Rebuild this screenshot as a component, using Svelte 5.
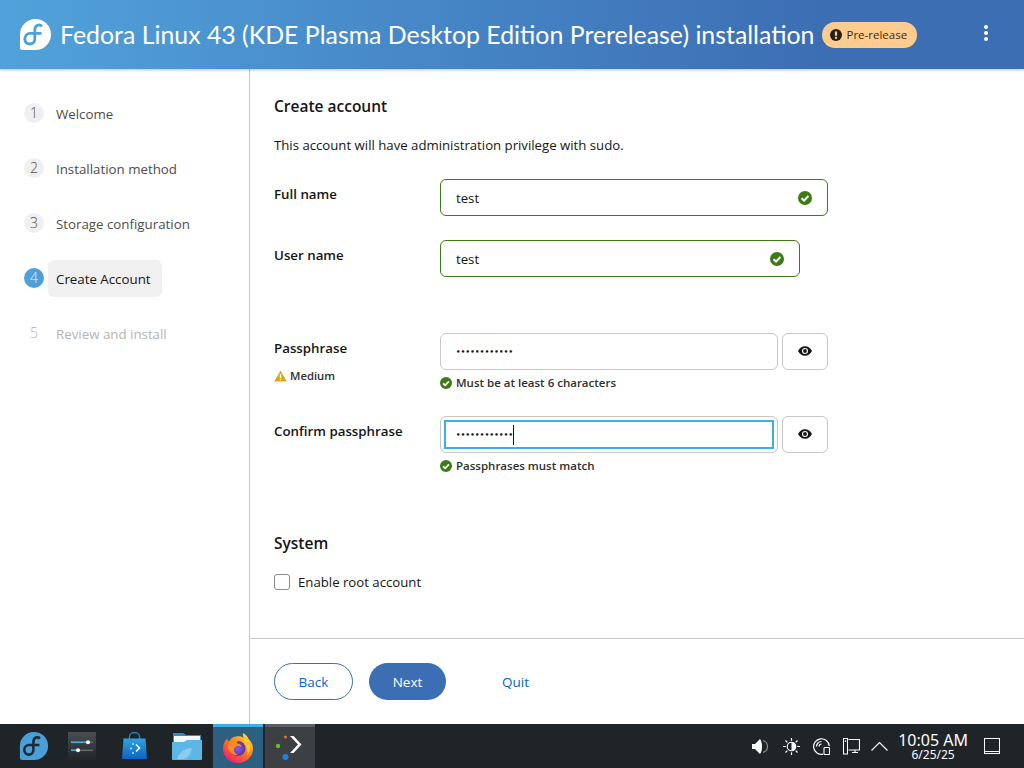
<script>
  const steps = [
    { n: 1, label: "Welcome" },
    { n: 2, label: "Installation method" },
    { n: 3, label: "Storage configuration" },
    { n: 4, label: "Create Account", current: true },
    { n: 5, label: "Review and install", disabled: true }
  ];
</script>

{#snippet okIcon(size)}
  <svg class="ok" width={size} height={size} viewBox="0 0 14 14">
    <circle cx="7" cy="7" r="7" fill="#3e7b17" />
    <path d="M3.6 7.3l2.4 2.3 4.4-4.6" fill="none" stroke="#fff" stroke-width="2" />
  </svg>
{/snippet}

{#snippet eyeIcon()}
  <svg width="14" height="10" viewBox="0 0 14 10">
    <path d="M0 5C1.6 2 4 .3 7 .3S12.400 2 14 5c-1.600 3-4 4.700-7 4.700S1.600 8 0 5z" fill="#151515" />
    <circle cx="7" cy="5" r="3" fill="#fff" />
    <circle cx="7" cy="5" r="1.900" fill="#151515" />
  </svg>
{/snippet}

{#snippet fedoraF(color)}
  <path d="M23 8.200C21 6.400 15.800 6 15.800 12.500V21C15.800 24 13.600 26 10.800 26 8 26 5.800 24 5.800 21 5.800 18 8 15.400 10.800 15.400H22.500" fill="none" stroke={color} stroke-width="2.800" />
{/snippet}

<div class="page">
  <header class="top">
    <svg class="logo" width="33" height="33" viewBox="0 0 33 33">
      <path d="M16.500 1A15.500 15.500 0 0 1 16.500 32H3.500A2.500 2.500 0 0 1 1 29.500V16.500A15.500 15.500 0 0 1 16.500 1z" fill="#fff" />
      {@render fedoraF("#4f9fd8")}
    </svg>
    <h1>Fedora Linux 43 (KDE Plasma Desktop Edition Prerelease) installation</h1>
    <span class="badge">
      <svg width="12" height="12" viewBox="0 0 12 12">
        <circle cx="6" cy="6" r="6" fill="#23201c" />
        <rect x="4.900" y="2.400" width="2.200" height="4.400" fill="#ffcc8f" />
        <rect x="4.900" y="7.800" width="2.200" height="2" fill="#ffcc8f" />
      </svg>
      Pre-release
    </span>
    <button class="kebab" aria-label="Menu"><i></i><i></i><i></i></button>
  </header>

  <div class="body">
    <nav class="steps">
      {#each steps as s}
        <div class="step" class:disabled={s.disabled} class:current={s.current}>
          <span class="num">{s.n}</span>
          <span class="name">{s.label}</span>
        </div>
      {/each}
    </nav>

    <div class="content">
      <main>
        <h2>Create account</h2>
        <p class="intro">This account will have administration privilege with sudo.</p>

        <div class="field full">
          <div class="lbl">Full name</div>
          <div class="input valid"><span>test</span>{@render okIcon(14)}</div>
        </div>

        <div class="field user">
          <div class="lbl">User name</div>
          <div class="input valid short"><span>test</span>{@render okIcon(14)}</div>
        </div>

        <div class="field pass">
          <div class="lbl">
            Passphrase
            <div class="strength">
              <svg width="13" height="12" viewBox="0 0 13 12">
                <path d="M6.500.5L12.800 11.500H.2z" fill="#dca614" />
                <rect x="5.800" y="4" width="1.400" height="4" fill="#fff" />
                <rect x="5.800" y="8.800" width="1.400" height="1.500" fill="#fff" />
              </svg>
              Medium
            </div>
          </div>
          <div class="col">
            <div class="row">
              <div class="input secret"><span class="dots">••••••••••••</span></div>
              <button class="eye" aria-label="Show">{@render eyeIcon()}</button>
            </div>
            <div class="help">{@render okIcon(12)} Must be at least 6 characters</div>
          </div>
        </div>

        <div class="field confirm">
          <div class="lbl">Confirm passphrase</div>
          <div class="col">
            <div class="row">
              <div class="input secret focused">
                <div class="focus-in"><span class="dots">••••••••••••</span><i class="caret"></i></div>
              </div>
              <button class="eye" aria-label="Show">{@render eyeIcon()}</button>
            </div>
            <div class="help">{@render okIcon(12)} Passphrases must match</div>
          </div>
        </div>

        <h2 class="sys">System</h2>
        <label class="check"><span class="box"></span>Enable root account</label>
      </main>

      <footer class="actions">
        <button class="btn back">Back</button>
        <button class="btn next">Next</button>
        <button class="btn quit">Quit</button>
      </footer>
    </div>
  </div>

  <div class="taskbar">
    <div class="launcher">
      <svg class="tb-fedora" width="30" height="30" viewBox="0 0 33 33">
        <path d="M16.500 1A15.500 15.500 0 0 1 16.500 32H3.500A2.500 2.500 0 0 1 1 29.500V16.500A15.500 15.500 0 0 1 16.500 1z" fill="#4a9fd8" />
        {@render fedoraF("#1f2a33")}
      </svg>

      <svg class="tb-settings" width="28" height="28" viewBox="0 0 28 28">
        <defs>
          <linearGradient id="sg" x1="0" y1="0" x2="0" y2="1">
            <stop offset="0" stop-color="#4a4e52" /><stop offset="1" stop-color="#22262a" />
          </linearGradient>
        </defs>
        <rect width="28" height="28" fill="url(#sg)" />
        <rect x="3" y="9.500" width="22" height="1.500" fill="#666" />
        <rect x="3" y="9.500" width="17" height="1.500" fill="#3daee9" />
        <circle cx="20" cy="10.200" r="2" fill="#fff" />
        <rect x="3" y="17.500" width="22" height="1.500" fill="#666" />
        <rect x="3" y="17.500" width="7" height="1.500" fill="#3daee9" />
        <circle cx="10" cy="18.200" r="2" fill="#fff" />
      </svg>

      <svg class="tb-store" width="26" height="28" viewBox="0 0 26 28">
        <defs>
          <linearGradient id="bg2" x1="0" y1="0" x2="0" y2="1">
            <stop offset="0" stop-color="#2ea3e6" /><stop offset="1" stop-color="#0f62c0" />
          </linearGradient>
        </defs>
        <path d="M7.500 8V4.500a5 4 0 0 1 10 0V8" fill="none" stroke="#2a86c4" stroke-width="1.300" />
        <path d="M1.500 6.500h22l1.500 20.500H0z" fill="url(#bg2)" />
        <path d="M14 12.500l3.500 3.500-3.500 3.500" fill="none" stroke="#fff" stroke-width="1.500" />
        <circle cx="11" cy="12" r="1" fill="#bde3ff" />
        <circle cx="9" cy="16.500" r="1" fill="#bde3ff" />
        <circle cx="11" cy="21" r="1" fill="#bde3ff" />
      </svg>

      <svg class="tb-folder" width="30" height="28" viewBox="0 0 30 28">
        <path d="M1 1h10l3 2h15v24H1z" fill="#2a8ec8" />
        <rect x="2" y="4" width="26" height="8" fill="#f4f6f8" />
        <path d="M0 10h12l3-2h15v19a1 1 0 0 1-1 1H1a1 1 0 0 1-1-1z" fill="#5cb6e6" />
        <path d="M5 27c2-7 9-11 15-11-1 5-4 10-8 11z" fill="#8accee" />
      </svg>

      <div class="task active">
        <svg width="32" height="32" viewBox="0 0 32 32">
          <defs>
            <linearGradient id="ff" x1=".8" y1=".1" x2=".2" y2=".9">
              <stop offset="0" stop-color="#ffd43a" /><stop offset=".45" stop-color="#ff7a1e" /><stop offset="1" stop-color="#f0246a" />
            </linearGradient>
            <radialGradient id="fp" cx=".5" cy=".5" r=".6">
              <stop offset="0" stop-color="#8a5be0" /><stop offset="1" stop-color="#4a2ea8" />
            </radialGradient>
          </defs>
          <path d="M16 31C7.500 31 1 24.500 1 16.500 1 12 3 8.500 5 6.500c.3 1.500 1 2.500 2 3 1.500-3 4-4.500 7-5 4-.5 6 0 7.500 1.500C21 4 20.500 2.500 21 1c3.500 2 4.500 4 6 6.500 2.500 2.500 4 5.500 4 9C31 24.500 24.500 31 16 31z" fill="url(#ff)" />
          <circle cx="16" cy="16.500" r="7.500" fill="url(#fp)" />
          <path d="M7 11c3-3 7-4 11-2.500-2.500.5-3.500 2-3 3 2 0 4.500 1 4.500 3.500-2-1.500-5-1-6.500.5-2 2-1 6 3 7.500-5 .5-9.500-3-10-8-.1-1.500.2-3 1-4z" fill="#ff8a1f" />
          <path d="M22 5c3 2 6 6 6 11 0 3-1 6-3 8 1-3 .5-7-1-10-.8-2-2-4-2-9z" fill="#ffc62e" />
        </svg>
      </div>

      <div class="task running">
        <svg width="32" height="32" viewBox="0 0 32 32">
          <circle cx="11.500" cy="5" r="1.500" fill="#e8734a" />
          <circle cx="4" cy="14" r="2.200" fill="#6cc024" />
          <circle cx="11.500" cy="25" r="3" fill="#1c7ff0" />
          <path d="M18 3l8 8.500-8 8.500h3.500l8-8.500-8-8.500z" transform="translate(-2 1)" fill="#fff" />
        </svg>
      </div>
    </div>

    <div class="tray">
      <svg class="t-vol" width="17" height="17" viewBox="0 0 17 17">
        <path d="M0 6h3l5-5v15l-5-5H0z" fill="#fcfcfc" />
        <path d="M8 1c1.500 2 2 4.500 2 7.500S9.500 14 8 16z" fill="#fcfcfc" />
        <path d="M11 2.500c3 1 4.500 3.200 4.500 6s-1.500 5-4.500 6" fill="none" stroke="#8a8e92" stroke-width="1.200" />
      </svg>
      <svg class="t-sun" width="17" height="17" viewBox="0 0 18 18">
        <circle cx="9" cy="9" r="4.500" fill="none" stroke="#fcfcfc" stroke-width="1.200" />
        <path d="M9 4.500a4.500 4.500 0 0 1 0 9z" fill="#fcfcfc" />
        <path d="M9 0v3M9 15v3M0 9h3M15 9h3M2.600 2.600l2 2M13.400 13.400l2 2M2.600 15.400l2-2M13.400 4.600l2-2" stroke="#fcfcfc" stroke-width="1.300" />
      </svg>
      <svg class="t-disc" width="17" height="17" viewBox="0 0 17 17">
        <path d="M10 16.200A7.800 7.800 0 1 1 16.200 8" fill="none" stroke="#fcfcfc" stroke-width="1.200" />
        <path d="M3.500 8.500A5 5 0 0 1 8.500 3.500M6 8.500A2.500 2.500 0 0 1 8.500 6" fill="none" stroke="#fcfcfc" stroke-width="1.200" />
        <rect x="11" y="9.500" width="5.500" height="7" rx=".8" fill="none" stroke="#fcfcfc" stroke-width="1.100" />
      </svg>
      <svg class="t-net" width="17" height="17" viewBox="0 0 17 17">
        <path d="M5.500 1.500H16.500V12H5.500M9 14.500h6M12 12v2.500" fill="none" stroke="#fcfcfc" stroke-width="1.100" />
        <rect x=".5" y=".5" width="4" height="15.500" fill="#1f2428" stroke="#fcfcfc" stroke-width="1" />
        <rect x="1.800" y="2.500" width="1.400" height="1.400" fill="#fcfcfc" />
      </svg>
      <svg class="t-up" width="17" height="9" viewBox="0 0 17 9">
        <path d="M.5 8.500l8-8 8 8" fill="none" stroke="#fcfcfc" stroke-width="1.100" />
      </svg>
      <div class="clock">
        <div class="time">10:05 AM</div>
        <div class="date">6/25/25</div>
      </div>
      <svg class="t-desk" width="16" height="16" viewBox="0 0 16 16">
        <rect x=".5" y=".5" width="15" height="15" fill="none" stroke="#fcfcfc" />
        <rect x="1" y="13" width="14" height="1" fill="#fcfcfc" />
      </svg>
    </div>
  </div>
</div>

<style>
  :global(body) {
    margin: 0;
    background: #fff;
  }
  .page {
    width: 1024px;
    height: 768px;
    display: flex;
    flex-direction: column;
    overflow: hidden;
    font-family: "Open Sans", "Noto Sans", sans-serif;
    font-size: 13.2px;
    color: #151515;
  }

  .top {
    height: 69px;
    flex: none;
    display: flex;
    align-items: center;
    padding-left: 19px;
    box-sizing: border-box;
    background: linear-gradient(90deg, #51a2da 0%, #3c6eb4 80%, #3c6eb4 100%);
    box-shadow: 0 1px 3px rgba(3, 3, 3, 0.25);
    position: relative;
    color: #fff;
  }
  .logo {
    flex: none;
  }
  h1 {
    margin: 0 0 2px 8px;
    font-family: "Lato", sans-serif;
    font-weight: 400;
    font-size: 24.870px;
    white-space: nowrap;
  }
  .badge {
    margin-left: 8px;
    height: 26px;
    width: 95px;
    box-sizing: border-box;
    padding-left: 8px;
    border-radius: 13px;
    background: #ffcc8f;
    color: #3d2c00;
    font-size: 11.500px;
    display: flex;
    align-items: center;
    gap: 4px;
  }
  .kebab {
    margin-left: 67px;
    margin-bottom: 3px;
    border: 0;
    padding: 0;
    background: none;
    display: flex;
    flex-direction: column;
    gap: 2px;
  }
  .kebab i {
    width: 4px;
    height: 4px;
    border-radius: 50%;
    background: #fff;
  }

  .body {
    flex: 1;
    display: flex;
    min-height: 0;
  }
  .steps {
    width: 250px;
    flex: none;
    box-sizing: border-box;
    border-right: 1px solid #c7c7c7;
    padding: 26px 0 0 24px;
    display: flex;
    flex-direction: column;
    gap: 18px;
    font-size: 13.300px;
  }
  .step {
    display: flex;
    align-items: center;
    gap: 4px;
    height: 37px;
    color: #4d4d4d;
  }
  .num {
    width: 20px;
    height: 20px;
    margin-top: -2px;
    border-radius: 50%;
    background: #f0f0f0;
    display: flex;
    align-items: center;
    justify-content: center;
    font-size: 14px;
    font-weight: 300;
  }
  .name {
    padding: 0 8px;
    height: 37px;
    line-height: 39px;
    border-radius: 6px;
  }
  .current .num {
    background: #4f9fd8;
    color: #e6f2fa;
  }
  .current .name {
    background: #f0f0f0;
    color: #151515;
    padding-right: 11px;
  }
  .disabled {
    color: #b4b4b4;
  }
  .disabled .num {
    background: none;
  }

  .content {
    flex: 1;
    display: flex;
    flex-direction: column;
    min-width: 0;
  }
  main {
    flex: 1;
    padding: 0 0 0 24px;
    min-height: 0;
  }
  h2 {
    margin: 0;
    font-size: 15.500px;
    font-weight: 600;
    line-height: 20px;
  }
  main > h2:first-child {
    padding-top: 27px;
  }
  .intro {
    margin: 19px 0 0;
    line-height: 20px;
  }
  .field {
    display: flex;
    align-items: flex-start;
  }
  .lbl {
    width: 166px;
    flex: none;
    font-weight: 600;
    line-height: 20px;
    padding-top: 5px;
    font-size: 13.300px;
  }
  .full {
    margin-top: 24px;
  }
  .user {
    margin-top: 24px;
  }
  .pass {
    margin-top: 56px;
  }
  .confirm {
    margin-top: 25px;
  }
  .input {
    height: 37px;
    box-sizing: border-box;
    border: 1px solid #c7c7c7;
    border-radius: 6px;
    width: 388px;
    padding: 0 15px;
    display: flex;
    align-items: center;
    justify-content: space-between;
    background: #fff;
  }
  .input span {
    padding-top: 1px;
  }
  .valid {
    border-color: #3e7b17;
  }
  .short {
    width: 360px;
  }
  .secret {
    width: 338px;
  }
  .dots {
    font-family: "DejaVu Sans", sans-serif;
    font-size: 7px;
    letter-spacing: 0.300px;
    font-weight: 700;
  }
  .col {
    display: flex;
    flex-direction: column;
    gap: 5px;
  }
  .row {
    display: flex;
    gap: 4px;
  }
  .eye {
    width: 46px;
    height: 37px;
    border: 1px solid #c7c7c7;
    border-radius: 6px;
    background: #fff;
    padding: 0 0 2px;
    display: flex;
    align-items: center;
    justify-content: center;
  }
  .focused {
    padding: 3px;
    justify-content: flex-start;
  }
  .focus-in {
    flex: 1;
    height: 29px;
    box-sizing: border-box;
    border: 2px solid #3daee9;
    padding-left: 10px;
    display: flex;
    align-items: center;
  }
  .caret {
    width: 1px;
    height: 20px;
    background: #151515;
  }
  .help {
    display: flex;
    align-items: center;
    gap: 4px;
    font-size: 11.500px;
    font-weight: 600;
    line-height: 16px;
    color: #2f2f2f;
  }
  .strength {
    display: flex;
    align-items: center;
    gap: 3px;
    font-size: 11.300px;
    margin-top: 10px;
    line-height: 16px;
    color: #2f2f2f;
  }
  .sys {
    margin-top: 59px;
  }
  .check {
    margin-top: 21px;
    display: flex;
    align-items: center;
    gap: 8px;
    height: 16px;
    line-height: 14px;
  }
  .box {
    width: 16px;
    height: 16px;
    box-sizing: border-box;
    border: 1px solid #8a8d90;
    border-radius: 3px;
  }

  .actions {
    height: 86px;
    flex: none;
    box-sizing: border-box;
    border-top: 1px solid #c7c7c7;
    padding: 24px 0 0 24px;
    display: flex;
    align-items: flex-start;
    gap: 16px;
  }
  .btn {
    height: 37px;
    border-radius: 19px;
    font: inherit;
    font-size: 13.500px;
    padding: 0;
    background: none;
    border: 0;
    color: #0066cc;
  }
  .back {
    width: 79px;
    border: 1px solid #3c6eb4;
  }
  .next {
    width: 77px;
    background: #3c6eb4;
    color: #fff;
  }
  .quit {
    width: 59px;
    margin-left: 24px;
  }

  .taskbar {
    height: 44px;
    flex: none;
    background: #1f2428;
    display: flex;
    justify-content: space-between;
    color: #fcfcfc;
  }
  .launcher {
    display: flex;
    align-items: center;
  }
  .tb-fedora {
    margin-left: 19px;
  }
  .tb-settings {
    margin-left: 19px;
  }
  .tb-store {
    margin-left: 26px;
  }
  .tb-folder {
    margin-left: 24px;
  }
  .task {
    width: 50px;
    height: 44px;
    box-sizing: border-box;
    border-top: 3px solid #5a5e62;
    background: #3c4043;
    display: flex;
    align-items: center;
    justify-content: center;
  }
  .task.active {
    margin-left: 11px;
    border-top-color: #3daee9;
    background: #2c5f80;
  }
  .task.running {
    margin-left: 2px;
  }
  .tray {
    display: flex;
    align-items: center;
    padding-right: 24px;
  }
  .t-sun {
    margin-left: 14px;
  }
  .t-disc {
    margin-left: 13px;
  }
  .t-net {
    margin-left: 13px;
  }
  .t-up {
    margin-left: 11px;
  }
  .clock {
    margin-left: 10px;
    text-align: center;
    font-family: "Noto Sans", sans-serif;
    padding-top: 1px;
  }
  .time {
    font-size: 16px;
    line-height: 16px;
  }
  .date {
    font-size: 12px;
    line-height: 13px;
  }
  .t-desk {
    margin-left: 16px;
  }
</style>
